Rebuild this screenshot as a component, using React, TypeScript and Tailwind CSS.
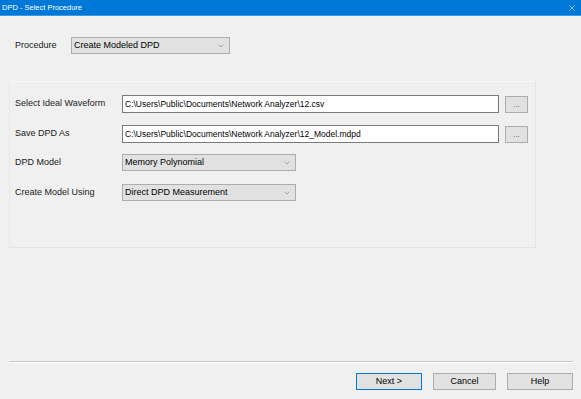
import { ChevronDown, X } from "lucide-react";

const font = { fontFamily: '"Segoe UI", "Liberation Sans", Arial, sans-serif' };

function Combo({ value, width }: { value: string; width: string }) {
  return (
    <div className={`${width} h-[17px] bg-[#e1e1e1] border border-[#adadad] flex items-center justify-between pl-[2px] pr-[4px]`}>
      <span className="text-[9px] leading-none text-black">{value}</span>
      <ChevronDown size={8} strokeWidth={1.5} className="text-[#606060]" />
    </div>
  );
}

function PathRow({ label, value }: { label: string; value: string }) {
  return (
    <div className="flex items-center h-[18px]">
      <span className="w-[107px] text-[9px] text-[#1a1a1a]">{label}</span>
      <div className="w-[377px] h-[18px] bg-white border border-[#7a7a7a] flex items-center pl-[2px]">
        <span className="text-[8.5px] leading-none text-black">{value}</span>
      </div>
      <button className="ml-[6px] w-[23px] h-[17px] bg-[#e1e1e1] border border-[#adadad] text-[8px] leading-none text-[#555] flex items-end justify-center pb-[3px]">
        ...
      </button>
    </div>
  );
}

function ComboRow({ label, value }: { label: string; value: string }) {
  return (
    <div className="flex items-center h-[17px]">
      <span className="w-[107px] text-[9px] text-[#1a1a1a]">{label}</span>
      <Combo value={value} width="w-[174px]" />
    </div>
  );
}

export default function App() {
  return (
    <div style={font} className="w-[581px] h-[399px] bg-[#f0f0f0] flex flex-col overflow-hidden">
      <div className="h-[16px] bg-[#0078d7] flex items-center justify-between pl-[2px] pr-[4px] border-b border-[#3d9ae4]">
        <span className="text-[7.5px] text-white leading-none">DPD - Select Procedure</span>
        <X size={10} strokeWidth={1.5} className="text-[#d8e9f8]" />
      </div>

      <div className="flex items-center mt-[21px] ml-[15px]">
        <span className="w-[56px] text-[9px] text-[#1a1a1a]">Procedure</span>
        <Combo value="Create Modeled DPD" width="w-[159px]" />
      </div>

      <div className="mt-[27px] ml-[9px] w-[527px] h-[167px] border border-[#e3e3e3] border-t-[#f7f7f7] border-l-[#e8e8e8] flex flex-col gap-[12px] pt-[13px] pl-[5px]">
        <PathRow label="Select Ideal Waveform" value="C:\Users\Public\Documents\Network Analyzer\12.csv" />
        <PathRow label="Save DPD As" value="C:\Users\Public\Documents\Network Analyzer\12_Model.mdpd" />
        <div className="flex flex-col gap-[13px] -mt-[1px]">
          <ComboRow label="DPD Model" value="Memory Polynomial" />
          <ComboRow label="Create Model Using" value="Direct DPD Measurement" />
        </div>
      </div>

      <div className="mt-[113px] ml-[9px] w-[564px] h-[2px] border-t border-[#c8c8c8] border-b border-b-white" />

      <div className="flex justify-end gap-[11px] mt-[10px] pr-[8px]">
        <button className="w-[66px] h-[17px] bg-[#e1e1e1] border border-[#0078d7] text-[9px] leading-none text-black">Next &gt;</button>
        <button className="w-[63px] h-[17px] bg-[#e1e1e1] border border-[#adadad] text-[9px] leading-none text-black">Cancel</button>
        <button className="w-[66px] h-[17px] bg-[#e1e1e1] border border-[#adadad] text-[9px] leading-none text-black">Help</button>
      </div>
    </div>
  );
}
